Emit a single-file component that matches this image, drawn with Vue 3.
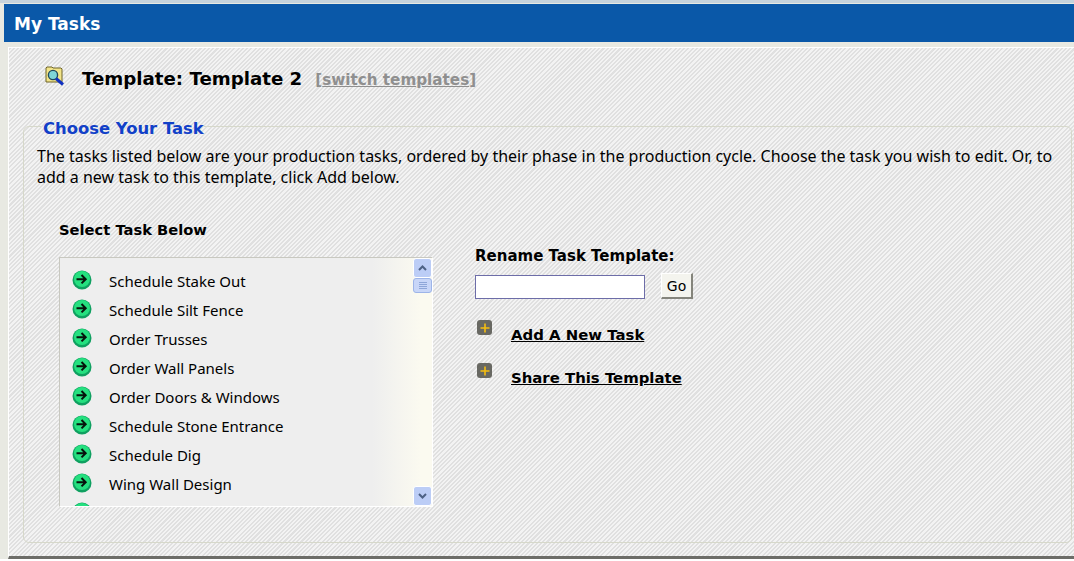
<template>
  <div class="page">
    <div class="header">My Tasks</div>
    <div class="content">
      <div class="template-row">
        <svg class="folder-icon" width="20" height="22" viewBox="0 0 20 22">
          <path d="M1 17V3l1-1h5l1 1h8l1 1v13z" fill="#f2e48a" stroke="#6f6428" />
          <circle cx="8" cy="10" r="4.6" fill="#7fd6d8" stroke="#204a60" stroke-width="1.4" />
          <path d="M11 13.5l7 6" stroke="#1030c0" stroke-width="3" />
        </svg>
        <span class="template-title">Template: Template 2</span>
        <a class="switch-link"><span>[</span><u>switch templates</u><span>]</span></a>
      </div>

      <fieldset class="task-box">
        <legend>Choose Your Task</legend>
        <p class="intro">
          The tasks listed below are your production tasks, ordered by their phase in the production cycle. Choose the task you wish to edit. Or, to add a new task to this template, click Add below.
        </p>

        <div class="columns">
          <div class="left-col">
            <div class="select-label">Select Task Below</div>
            <div class="task-list">
              <div class="rows">
                <div v-for="task in tasks" :key="task" class="task-row">
                  <svg class="arrow-icon" width="20" height="20" viewBox="0 0 20 20">
                    <circle cx="10" cy="10" r="9.5" fill="#0fa060" />
                    <circle cx="10" cy="9" r="8" fill="#25e07f" />
                    <path d="M4.5 9.2h9M9.5 5l4.2 4.2-4.2 4.2" fill="none" stroke="#06140c" stroke-width="2" />
                  </svg>
                  <span>{{ task }}</span>
                </div>
              </div>
              <div class="scrollbar">
                <div class="scroll-btn">
                  <svg width="9" height="6" viewBox="0 0 9 6"><path d="M1 5l3.5-3.5L8 5" fill="none" stroke="#4d6185" stroke-width="2" /></svg>
                </div>
                <div class="scroll-thumb"><i></i><i></i><i></i><i></i></div>
                <div class="scroll-track"></div>
                <div class="scroll-btn">
                  <svg width="9" height="6" viewBox="0 0 9 6"><path d="M1 1l3.5 3.5L8 1" fill="none" stroke="#4d6185" stroke-width="2" /></svg>
                </div>
              </div>
            </div>
          </div>

          <div class="right-col">
            <label class="rename-label">Rename Task Template:</label>
            <div class="rename-row">
              <input v-model="name" type="text" class="rename-input" />
              <button class="go-btn">Go</button>
            </div>
            <div v-for="action in actions" :key="action" class="action-row">
              <span class="plus-icon">
                <svg width="14" height="14" viewBox="0 0 14 14"><path d="M7 2.5v9M2.5 7h9" stroke="#f5bd10" stroke-width="1.6" /></svg>
              </span>
              <a class="action-link">{{ action }}</a>
            </div>
          </div>
        </div>
      </fieldset>
    </div>
  </div>
</template>

<script setup>
import { ref } from "vue";

const name = ref("");

// the last row is scrolled almost out of view, only the top of its icon shows
const tasks = [
  "Schedule Stake Out",
  "Schedule Silt Fence",
  "Order Trusses",
  "Order Wall Panels",
  "Order Doors & Windows",
  "Schedule Stone Entrance",
  "Schedule Dig",
  "Wing Wall Design",
  "",
];

const actions = ["Add A New Task", "Share This Template"];
</script>

<style>
html,
body {
  margin: 0;
  background: #fff;
  overflow: hidden;
}
</style>

<style scoped>
.page {
  width: 1074px;
  height: 561px;
  box-sizing: border-box;
  padding: 4px 0 0 4px;
  background: linear-gradient(to bottom, #c6d3dc 0, #c6d3dc 3px, #e8e9e2 3px, #e8e9e2 559px, #fff 559px);
  font-family: "DejaVu Sans", Verdana, sans-serif;
  color: #000;
}

.header {
  height: 38px;
  line-height: 40px;
  padding-left: 10px;
  background: #0a58a8;
  color: #fff;
  font-size: 17px;
  font-weight: bold;
}

.content {
  height: 512px;
  margin: 5px 0 0 4px;
  padding: 0 0 0 14px;
  box-sizing: border-box;
  border-top: 1px solid #fff;
  border-left: 1px solid #fff;
  border-bottom: 3px solid #6d6d68;
  background: repeating-linear-gradient(135deg, #e0e0e0 0, #e0e0e0 1.5px, #f3f3f3 1.5px, #f3f3f3 3px);
}

.template-row {
  display: flex;
  align-items: center;
  height: 61px;
  margin-bottom: 4px;
  padding-left: 22px;
}

.folder-icon {
  margin: -5px 17px 0 0;
}

.template-title {
  font-size: 18.2px;
  font-weight: bold;
  margin-right: 13px;
}

.switch-link {
  font-size: 15.2px;
  font-weight: bold;
  color: #8f8f8f;
  margin-top: 2px;
}

.task-box {
  margin: 0 2px 0 0;
  height: 430px;
  box-sizing: border-box;
  padding: 0 13px;
  border: 1px solid #d6d8ca;
  border-radius: 6px;
  min-width: 0;
}

.task-box legend {
  padding: 6px 0 0 2px;
  margin-left: 4px;
  color: #1140c8;
  font-size: 16.4px;
  font-weight: bold;
  line-height: 20px;
}

.intro {
  margin: 7px 0 0;
  font-family: "Noto Sans", sans-serif;
  font-size: 16px;
  line-height: 21px;
}

.columns {
  display: flex;
  margin-top: 33px;
}

.left-col {
  width: 374px;
  margin-left: 22px;
}

.select-label {
  font-size: 14.7px;
  font-weight: bold;
  line-height: 18px;
  margin-bottom: 18px;
}

.task-list {
  display: flex;
  height: 250px;
  box-sizing: border-box;
  border: 1px solid #c8c8c0;
  border-right-color: #fff;
  border-bottom-color: #fff;
  overflow: hidden;
  background: linear-gradient(to right, #eeeeee 0, #eeeeee 84%, #fbfaf0 97%);
}

.rows {
  flex: 1;
  padding-top: 7px;
  overflow: hidden;
}

.task-row {
  display: flex;
  height: 29px;
  padding-left: 12px;
  font-family: "Noto Sans", sans-serif;
  font-size: 15px;
  line-height: 32px;
}

.arrow-icon {
  margin: 5px 17px 0 0;
  flex: none;
}

.scrollbar {
  width: 19px;
  display: flex;
  flex-direction: column;
}

.scroll-btn {
  height: 18px;
  flex: none;
  display: flex;
  align-items: center;
  justify-content: center;
  border: 1px solid #fff;
  border-radius: 3px;
  background: #bccdf6;
}

.scroll-thumb {
  height: 13px;
  flex: none;
  display: flex;
  flex-direction: column;
  align-items: center;
  justify-content: center;
  gap: 1px;
  border: 1px solid #9db4e8;
  border-radius: 3px;
  background: #c8d6f8;
}

.scroll-thumb i {
  display: block;
  width: 8px;
  height: 1px;
  background: #8ea6d8;
}

.scroll-track {
  flex: 1;
}

.right-col {
  margin: 26px 0 0 42px;
}

.rename-label {
  display: block;
  font-size: 15px;
  font-weight: bold;
  line-height: 18px;
}

.rename-row {
  display: flex;
  align-items: center;
  margin-top: 8px;
}

.rename-input {
  width: 170px;
  height: 24px;
  box-sizing: border-box;
  border: 1px solid #6d6da8;
  background: #fff;
  padding: 0 3px;
}

.go-btn {
  width: 32px;
  height: 26px;
  margin: 0 0 2px 16px;
  padding: 0;
  background: #f4f4ee;
  border: 1px solid #fff;
  border-right: 2px solid #85857c;
  border-bottom: 2px solid #85857c;
  font-family: "DejaVu Sans", sans-serif;
  font-size: 14px;
  color: #000;
}

.action-row {
  display: flex;
  height: 43px;
  align-items: flex-start;
}

.rename-row + .action-row {
  margin-top: 19px;
}

.plus-icon {
  width: 15px;
  height: 15px;
  margin-left: 2px;
  display: flex;
  align-items: center;
  justify-content: center;
  border-radius: 3px;
  background: #686862;
  margin-right: 19px;
}

.action-link {
  font-size: 14.9px;
  font-weight: bold;
  line-height: 18px;
  margin-top: 6px;
  text-decoration: underline;
  color: #000;
}
</style>
